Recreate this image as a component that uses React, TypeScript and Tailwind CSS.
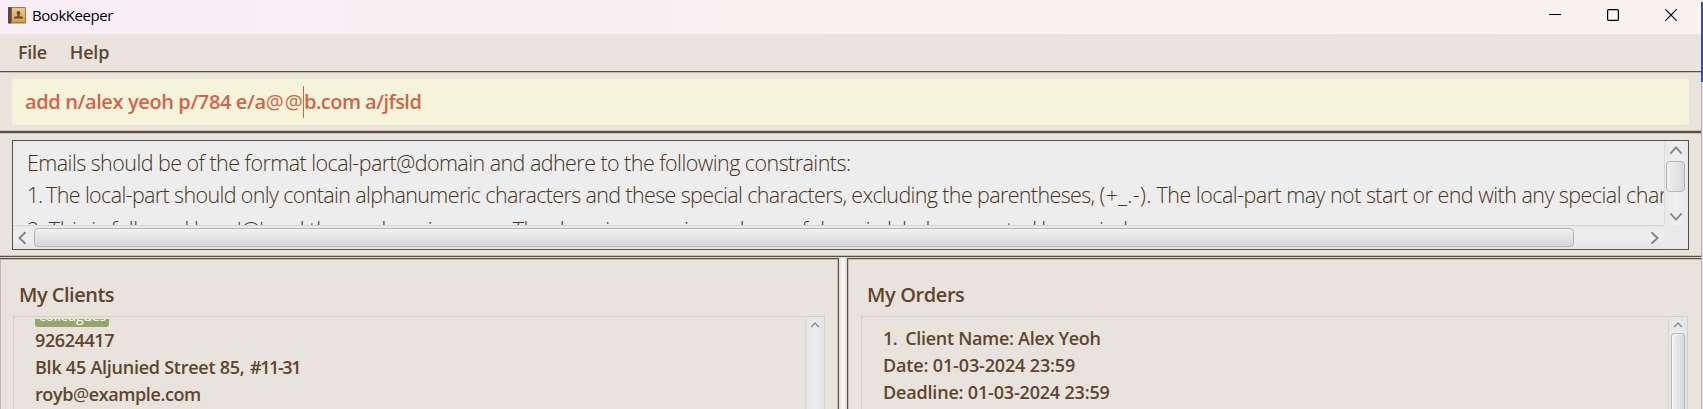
import type { ReactNode } from "react";

type Direction = "up" | "down" | "left" | "right";

const chevrons: Record<Direction, string> = {
  up: "M1 8 L7 1.5 L13 8",
  down: "M1 1.5 L7 8 L13 1.5",
  left: "M8 1 L1.5 7 L8 13",
  right: "M1.5 1 L8 7 L1.5 13",
};

function Chevron({ direction, className }: { direction: Direction; className: string }) {
  const vertical = direction === "up" || direction === "down";
  return (
    <svg
      viewBox={vertical ? "0 0 14 9.5" : "0 0 9.5 14"}
      className={className}
      fill="none"
      stroke="#858585"
      strokeWidth="2"
    >
      <path d={chevrons[direction]} />
    </svg>
  );
}

function BookIcon() {
  return (
    <svg viewBox="0 0 18 17" className="h-[17px] w-[18px] shrink-0">
      <defs>
        <linearGradient id="cover" x1="0" y1="0" x2="0" y2="1">
          <stop offset="0" stopColor="#e9c98c" />
          <stop offset="1" stopColor="#d9a03f" />
        </linearGradient>
      </defs>
      <rect x="0" y="0" width="18" height="16.5" rx="1" fill="#a8783f" />
      <rect x="0" y="0" width="3.5" height="16.5" rx="1" fill="#54484a" />
      <rect x="4" y="1" width="13" height="14" fill="url(#cover)" />
      <path
        d="M10.500 4c1.200 0 1.800.8 1.800 1.900 0 .8-.3 1.500-.8 2v1.500h2.500c.5 0 .8.300.8.700V11.500H6.200v-1.400c0-.4.300-.7.800-.7h2.500V7.900c-.5-.5-.8-1.200-.8-2C8.700 4.800 9.300 4 10.500 4z"
        fill="#5a4a3c"
      />
    </svg>
  );
}

function TitleBar() {
  return (
    <header className="flex h-[34px] shrink-0 bg-linear-to-r from-[#f9eef5] to-[#faf2ee] text-black">
      <div className="flex flex-1 gap-1.5 pt-[7px] pl-2">
        <BookIcon />
        <span className="-mt-[3px] text-[15px] leading-[23px] tracking-[-0.45px]">BookKeeper</span>
      </div>
      <div className="flex gap-[46px] pt-[9px] pr-6">
        <svg viewBox="0 0 12 12" className="h-3 w-3">
          <path d="M0 5.500H12" stroke="#000" />
        </svg>
        <svg viewBox="0 0 12 12" className="h-3 w-3 fill-none">
          <rect x="0.600" y="0.600" width="10.800" height="10.800" rx="1" stroke="#000" strokeWidth="1.200" />
        </svg>
        <svg viewBox="0 0 12 12" className="h-3 w-3">
          <path d="M0.300 0.300L11.700 11.700M11.700 0.300L0.300 11.700" stroke="#000" strokeWidth="1.200" />
        </svg>
      </div>
    </header>
  );
}

function ResultDisplay() {
  return (
    <section className="mx-3 mt-1.5 flex h-[110px] shrink-0 flex-col border border-[#5c5045] bg-[#ededed]">
      <div className="flex h-[84px]">
        <div className="w-[1651px] overflow-hidden pt-1.5 pl-3.5 text-[21.5px] leading-8 font-light whitespace-nowrap text-[#4a3320]">
          <p className="tracking-[-0.56px]">
            Emails should be of the format local-part@domain and adhere to the following constraints:
          </p>
          <p className="tracking-[-0.53px]">
            <span className="tracking-[-1.3px]">1. </span>
            <span className="tracking-[-0.64px]">
              The local-part should only contain alphanumeric characters and these special characters,
              excluding the parentheses,{" "}
            </span>
            <span className="tracking-[0.3px]">(+_.-).</span> The local-part may not start or end with any
            special characters.
          </p>
          <p className="mt-[3px] tracking-[-0.6px]">
            <span className="tracking-[-0.4px]">2. This is followed by a '@' and then a domain name. </span>
            The domain name is made up of domain labels separated by periods.
          </p>
        </div>
        <div className="flex flex-1 flex-col items-center border-l border-[#dcdcdc] bg-linear-to-r from-[#e9e9e9] via-[#efefef] to-[#e7e7e7] pt-[5px] pr-0.5 pb-1">
          <Chevron direction="up" className="h-[9px] w-3.5" />
          <div className="mt-1.5 h-[31px] w-[19px] rounded-[4px] border border-[#b6b6b6] bg-linear-to-r from-[#f1f1f1] to-[#d9d9d9]" />
          <Chevron direction="down" className="mt-auto h-[9px] w-3.5" />
        </div>
      </div>
      <div className="flex flex-1">
        <div className="flex w-[1651px] items-center border-t border-[#d6d6d6] bg-linear-to-b from-[#e9e9e9] via-[#efefef] to-[#e4e4e4] pr-[5px] pl-[5px]">
          <Chevron direction="left" className="h-3.5 w-[9px]" />
          <div className="ml-[7px] h-[19px] w-[1540px] rounded-[4px] border border-[#b6b6b6] bg-linear-to-b from-[#f1f1f1] to-[#d7d7d7]" />
          <Chevron direction="right" className="ml-auto h-3.5 w-[9px]" />
        </div>
        <div className="flex-1 bg-[#e9e9e9]" />
      </div>
    </section>
  );
}

function ListBox({ children, thumb, className }: { children: ReactNode; thumb?: boolean; className: string }) {
  return (
    <div className={`flex flex-1 border border-b-0 border-[#d0d0d0] pt-0.5 ${className}`}>
      <div className="flex-1 overflow-hidden pl-[21px] text-lg leading-[27px] font-semibold">{children}</div>
      <div className="flex w-[19px] flex-col items-center border-l border-[#d6d6d6] bg-linear-to-r from-[#e5e5e5] via-[#ececec] to-[#e4e4e4] pt-[3px] pr-px">
        <Chevron direction="up" className="h-[6px] w-[10px]" />
        {thumb && (
          <div className="mt-[5px] w-3.5 flex-1 rounded-t-[4px] border border-b-0 border-[#b6b6b6] bg-linear-to-r from-[#f1f1f1] to-[#d9d9d9] shadow-[inset_1px_1px_0_#fafafa]" />
        )}
      </div>
    </div>
  );
}

export default function App() {
  return (
    <div className="flex h-[409px] w-[1703px] overflow-hidden bg-[#e8e3dc] font-['Open_Sans','Noto_Sans',sans-serif] text-[#5f452c]">
      <div className="flex w-[1701px] flex-col">
        <TitleBar />
        <nav className="flex h-[37px] shrink-0 gap-[23px] pl-[18px] text-lg leading-[37px] font-semibold">
          <span className="tracking-[-0.3px]">File</span>
          <span className="tracking-[-0.2px]">Help</span>
        </nav>
        <div className="h-[59px] shrink-0 border-t border-[#5c5045] shadow-[inset_0_1px_0_#c6bfb5]">
          <div className="mx-3 mt-[7px] flex h-[46px] rounded-[3px] bg-[#f4f4da] pl-[13px] text-xl leading-[46px] font-semibold whitespace-pre text-[#d1644b]">
            <span className="w-[278px] tracking-[-0.38px]">
              add n/alex yeoh p/784 e/a<span className="font-normal tracking-[1.1px]">@@</span>
            </span>
            <span className="mt-[7px] h-8 w-px bg-[#d1644b]" />
            <span className="tracking-[-0.54px]">b.com a/jfsld</span>
          </div>
        </div>
        <div className="h-1 shrink-0 border-y border-[#c6bfb5] bg-[#5c5045]" />
        <ResultDisplay />
        <div className="mt-[5px] h-[3px] shrink-0 border-t border-b border-t-[#c6bfb5] border-b-[#dcd6cd] bg-[#5c5045]" />
        <main className="flex flex-1">
          <section className="flex w-[839px] flex-col border-t border-r border-[#5c5045] pr-[13px] pl-3 shadow-[inset_1px_1px_0_#bfb7af,inset_-1px_0_0_#c6bfb5]">
            <h2 className="h-[57px] pt-[22px] pl-[7px] text-xl leading-7 font-semibold tracking-[-0.5px]">My Clients</h2>
            <ListBox className="ml-px">
              <span className="-mt-3 block h-5 w-[74px] rounded-[3px] bg-[#96a56b] pl-1 text-sm leading-[18px] font-normal tracking-[-0.15px] text-white">
                colleagues
              </span>
              <p className="tracking-[-0.4px]">92624417</p>
              <p className="tracking-[-0.25px]">
                Blk 45 Aljunied Street 85, <span className="ml-px tracking-[-1.4px]">#11-31</span>
              </p>
              <p className="tracking-[-0.4px]">
                royb<span className="font-normal">@</span>example.com
              </p>
            </ListBox>
          </section>
          <div className="w-2 bg-linear-to-r from-[#dedede] via-[#fbfbfb] to-[#d8d8d8]" />
          <section className="flex flex-1 flex-col border-t border-l border-[#5c5045] pr-[13px] pl-[13px] shadow-[inset_1px_1px_0_#c6bfb5]">
            <h2 className="h-[57px] pt-[22px] pl-[6px] text-xl leading-7 font-semibold tracking-[-0.4px]">My Orders</h2>
            <ListBox thumb className="">
              <div className="flex gap-2 pt-1.5">
                <span className="tracking-[-0.5px]">1.</span>
                <span className="tracking-[-0.3px]">Client Name: Alex Yeoh</span>
              </div>
              <p className="tracking-[-0.15px]">Date: 01-03-2024 23:59</p>
              <p className="tracking-[-0.18px]">Deadline: 01-03-2024 23:59</p>
            </ListBox>
          </section>
        </main>
      </div>
      <div className="flex w-0.5 flex-col bg-[#b9b5b4]">
        <div className="h-0.5 bg-[#e9e4ea]" />
        <div className="h-20 bg-[#3b4ca6]" />
        <div className="ml-px flex-1 bg-[#dcdbe3]" />
      </div>
    </div>
  );
}
